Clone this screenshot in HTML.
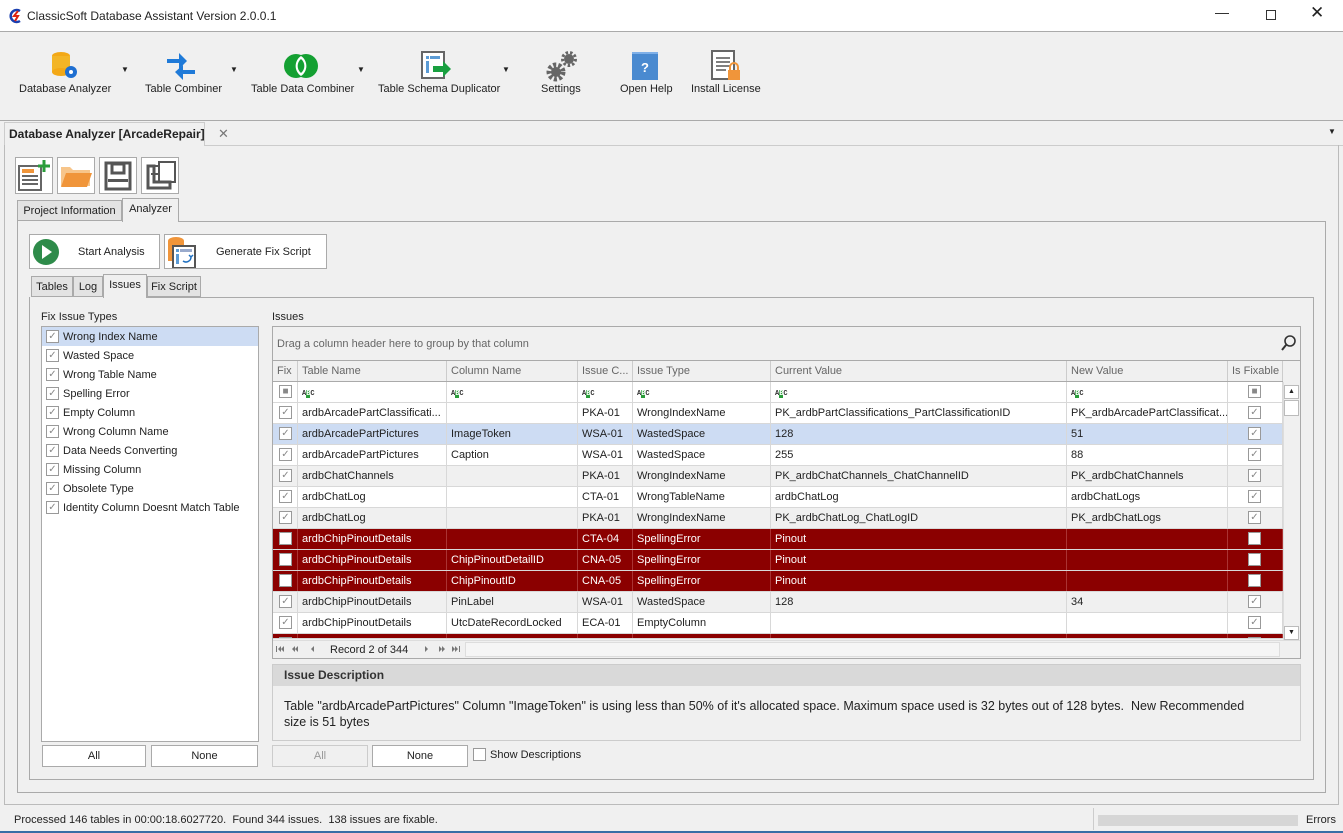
<!DOCTYPE html><html><head><style>
*{box-sizing:border-box;margin:0;padding:0}
body{width:1343px;height:833px;background:#f0f0f0;font-family:"Liberation Sans",sans-serif;font-size:11px;color:#222;position:relative;overflow:hidden}
.a{position:absolute}
.b{position:absolute;border:1px solid #aaa}
.t{position:absolute;white-space:nowrap}
.row{position:absolute;left:273px;width:1010px;height:21px;border-bottom:1px solid #d8d8d8}
.row div{position:absolute;top:0;height:20px;line-height:20px;padding-left:4px;border-right:1px solid #d8d8d8;white-space:nowrap;overflow:hidden}
.cb{position:absolute;width:13px;height:13px;border:1px solid #999;background:#fff;color:#888;font-size:10px;line-height:11px;text-align:center}
.red{background:#8b0000;color:#fff}
.red div{border-right-color:#a33}
.btn{position:absolute;background:#fff;border:1px solid #aaa;text-align:center}
.tab{position:absolute;border:1px solid #aaa;background:#e3e3e3;text-align:center;line-height:20px}
</style></head><body>
<div class="a" style="left:0;top:0;width:1343px;height:32px;background:#fff;border-bottom:1px solid #aaa"></div>
<svg class="a" style="left:8px;top:8px" width="16" height="16"><path d="M12 3A6 6 0 1 0 12 13" fill="none" stroke="#1a3fb0" stroke-width="2.5"/><path d="M10 3L6 8h4l-3 5" fill="none" stroke="#d21" stroke-width="2"/></svg>
<div class="t" style="left:27px;top:9px;font-size:12px">ClassicSoft Database Assistant Version 2.0.0.1</div>
<div class="t" style="left:1215px;top:4px;font-size:14px">&#8212;</div>
<div class="a" style="left:1266px;top:10px;width:10px;height:10px;border:1px solid #333"></div>
<div class="t" style="left:1310px;top:3px;font-size:17px">&#10005;</div>
<svg class="a" style="left:50px;top:50px" width="32" height="32"><ellipse cx="11" cy="6" rx="9" ry="4" fill="#f3a816"/><rect x="2" y="6" width="18" height="16" fill="#f3b526"/><ellipse cx="11" cy="22" rx="9" ry="4" fill="#f3a816"/><circle cx="21" cy="22" r="6" fill="#1f6fd1"/><circle cx="21" cy="22" r="2" fill="#fff"/></svg>
<div class="t" style="left:19px;top:83px">Database Analyzer</div><div class="t" style="left:121px;top:65px;font-size:8px">&#9660;</div>
<svg class="a" style="left:165px;top:50px" width="32" height="32"><path d="M2 9h12V3l8 8-8 8v-6H2z" fill="#1f7ad8"/><path d="M30 20H18v-5l-8 7 8 8v-6h12z" fill="#1f7ad8"/></svg>
<div class="t" style="left:145px;top:83px">Table Combiner</div><div class="t" style="left:230px;top:65px;font-size:8px">&#9660;</div>
<svg class="a" style="left:284px;top:53px" width="34" height="26"><circle cx="12" cy="13" r="12" fill="#14a032"/><circle cx="22" cy="13" r="12" fill="#14a032"/><path d="M17 3a12 12 0 0 1 0 20a12 12 0 0 1 0-20z" fill="#fff"/><path d="M17 6a9 9 0 0 1 0 14a9 9 0 0 1 0-14z" fill="#14a032"/></svg>
<div class="t" style="left:251px;top:83px">Table Data Combiner</div><div class="t" style="left:357px;top:65px;font-size:8px">&#9660;</div>
<svg class="a" style="left:421px;top:51px" width="32" height="30"><rect x="1" y="1" width="22" height="26" fill="#fff" stroke="#666" stroke-width="2"/><rect x="5" y="5" width="3" height="3" fill="#5b9bd5"/><rect x="9" y="5" width="10" height="3" fill="#5b9bd5"/><rect x="5" y="10" width="3" height="12" fill="#5b9bd5"/><path d="M12 15h10v-5l8 8-8 8v-5H12z" fill="#19a040"/></svg>
<div class="t" style="left:378px;top:83px">Table Schema Duplicator</div><div class="t" style="left:502px;top:65px;font-size:8px">&#9660;</div>
<svg class="a" style="left:545px;top:50px" width="34" height="32"><circle cx="11" cy="22" r="7" fill="none" stroke="#666" stroke-width="5" stroke-dasharray="3 2"/><circle cx="11" cy="22" r="5" fill="#666"/><circle cx="24" cy="9" r="5" fill="#666"/><circle cx="24" cy="9" r="6.5" fill="none" stroke="#666" stroke-width="3" stroke-dasharray="2.5 2"/></svg>
<div class="t" style="left:541px;top:83px">Settings</div>
<svg class="a" style="left:632px;top:52px" width="26" height="28"><rect x="0" y="0" width="26" height="28" fill="#4a8ad0"/><rect x="0" y="0" width="26" height="2" fill="#7fb0e8"/><text x="9" y="20" fill="#fff" font-size="13" font-weight="bold" font-family="Liberation Sans">?</text></svg>
<div class="t" style="left:620px;top:83px">Open Help</div>
<svg class="a" style="left:711px;top:50px" width="32" height="32"><rect x="1" y="1" width="22" height="28" fill="#fff" stroke="#666" stroke-width="2"/><path d="M5 8h14M5 12h14M5 16h14M5 20h10" stroke="#555" stroke-width="1.5"/><rect x="17" y="20" width="12" height="10" fill="#f0953a"/><path d="M19 20v-3a4 4 0 0 1 8 0v3" fill="none" stroke="#f0953a" stroke-width="2"/></svg>
<div class="t" style="left:691px;top:83px">Install License</div>
<div class="a" style="left:0;top:120px;width:1343px;height:1px;background:#aaa"></div>
<div class="a" style="left:4px;top:122px;width:201px;height:24px;border:1px solid #ccc;border-bottom:none;background:#f0f0f0"></div>
<div class="t" style="left:9px;top:127px;font-weight:bold;font-size:12px">Database Analyzer [ArcadeRepair]</div>
<div class="t" style="left:218px;top:126px;color:#777;font-size:13px">&#10005;</div>
<div class="t" style="left:1328px;top:127px;font-size:8px">&#9660;</div>
<div class="a" style="left:205px;top:145px;width:1138px;height:1px;background:#ccc"></div>
<div class="a" style="left:4px;top:145px;width:1335px;height:660px;border:1px solid #bbb;border-top:none"></div>
<div class="b" style="left:15px;top:157px;width:38px;height:37px;background:#fff"></div>
<svg class="a" style="left:17px;top:160px" width="34" height="32"><rect x="2" y="6" width="22" height="24" fill="#fff" stroke="#666" stroke-width="2"/><rect x="5" y="9" width="12" height="4" fill="#f0953a"/><path d="M5 16h16M5 20h16M5 24h16" stroke="#666" stroke-width="2"/><path d="M27 0v12M21 6h12" stroke="#2a9d3a" stroke-width="3"/></svg>
<div class="b" style="left:57px;top:157px;width:38px;height:37px;background:#fff"></div>
<svg class="a" style="left:60px;top:163px" width="32" height="26"><path d="M1 4h9l3 3h17v16H1z" fill="#f7c58a"/><path d="M6 10h26l-5 14H1z" fill="#f0953a"/></svg>
<div class="b" style="left:99px;top:157px;width:38px;height:37px;background:#fff"></div>
<svg class="a" style="left:104px;top:161px" width="28" height="30"><rect x="2" y="2" width="24" height="26" fill="none" stroke="#555" stroke-width="3"/><rect x="8" y="3" width="12" height="9" fill="none" stroke="#555" stroke-width="3"/><rect x="4" y="18" width="20" height="3" fill="#555"/></svg>
<div class="b" style="left:141px;top:157px;width:38px;height:37px;background:#fff"></div>
<svg class="a" style="left:145px;top:160px" width="32" height="30"><path d="M3 6v22h22v-6H9V6z" fill="none" stroke="#555" stroke-width="3"/><path d="M6 6h8v8H6" fill="none" stroke="#555" stroke-width="2"/><rect x="14" y="2" width="16" height="20" fill="none" stroke="#555" stroke-width="2"/></svg>
<div class="tab" style="left:17px;top:200px;width:105px;height:21px">Project Information</div>
<div class="tab" style="left:122px;top:198px;width:57px;height:24px;background:#f0f0f0;border-bottom:none">Analyzer</div>
<div class="a" style="left:17px;top:221px;width:1309px;height:572px;border:1px solid #aaa;border-top:none"></div>
<div class="a" style="left:179px;top:221px;width:1147px;height:1px;background:#aaa"></div>
<div class="btn" style="left:29px;top:234px;width:131px;height:35px"></div>
<svg class="a" style="left:32px;top:238px" width="28" height="28"><circle cx="14" cy="14" r="13" fill="#2e8b4a"/><path d="M10 7l10 7-10 7z" fill="#fff"/></svg>
<div class="t" style="left:78px;top:246px">Start Analysis</div>
<div class="btn" style="left:164px;top:234px;width:163px;height:35px"></div>
<svg class="a" style="left:167px;top:236px" width="32" height="32"><ellipse cx="9" cy="5" rx="8" ry="4" fill="#f0953a"/><rect x="1" y="5" width="16" height="20" fill="#f0953a"/><rect x="6" y="10" width="22" height="22" fill="#fff" stroke="#555" stroke-width="2"/><rect x="9" y="13" width="3" height="3" fill="#5b9bd5"/><rect x="13" y="13" width="12" height="3" fill="#9ac"/><rect x="9" y="18" width="3" height="10" fill="#5b9bd5"/><path d="M16 25a5 5 0 0 0 8-4M22 19l2 2 2-2" fill="none" stroke="#2070c0" stroke-width="1.5"/></svg>
<div class="t" style="left:216px;top:246px">Generate Fix Script</div>
<div class="tab" style="left:31px;top:276px;width:42px;height:21px">Tables</div>
<div class="tab" style="left:73px;top:276px;width:30px;height:21px">Log</div>
<div class="tab" style="left:103px;top:274px;width:44px;height:24px;background:#f0f0f0;border-bottom:none">Issues</div>
<div class="tab" style="left:147px;top:276px;width:54px;height:21px">Fix Script</div>
<div class="a" style="left:29px;top:297px;width:1285px;height:483px;border:1px solid #aaa;border-top:none"></div>
<div class="a" style="left:147px;top:297px;width:1167px;height:1px;background:#aaa"></div>
<div class="t" style="left:41px;top:311px">Fix Issue Types</div>
<div class="a" style="left:41px;top:326px;width:218px;height:416px;background:#fff;border:1px solid #aaa"></div>
<div class="a" style="left:42px;top:327px;width:216px;height:19px;background:#cddcf3"></div>
<div id="L"></div>
<div class="btn" style="left:42px;top:745px;width:104px;height:22px;line-height:20px">All</div>
<div class="btn" style="left:151px;top:745px;width:107px;height:22px;line-height:20px">None</div>
<div class="t" style="left:272px;top:311px">Issues</div>
<div class="a" style="left:272px;top:326px;width:1029px;height:333px;border:1px solid #aaa;background:#f0f0f0"></div>
<div class="t" style="left:277px;top:338px;color:#666">Drag a column header here to group by that column</div>
<svg class="a" style="left:1281px;top:335px" width="16" height="16"><circle cx="9" cy="6" r="5" fill="none" stroke="#333" stroke-width="1.6"/><path d="M5 10l-4 5" stroke="#333" stroke-width="2"/></svg>
<div class="a" style="left:273px;top:360px;width:1027px;height:1px;background:#aaa"></div>
<div class="row" style="top:361px;height:21px;border-bottom-color:#aaa;color:#666" id="H"></div>
<div class="row" style="top:382px;background:#fff" id="F"></div>
<div id="R"></div>
<div class="a" style="left:1283px;top:382px;width:17px;height:258px;background:#f0f0f0;border-left:1px solid #ddd"></div>
<div class="a" style="left:1284px;top:385px;width:15px;height:14px;border:1px solid #bbb;background:#fff;font-size:7px;text-align:center;line-height:12px">&#9650;</div>
<div class="a" style="left:1284px;top:400px;width:15px;height:16px;border:1px solid #bbb;background:#fff"></div>
<div class="a" style="left:1284px;top:626px;width:15px;height:14px;border:1px solid #bbb;background:#fff;font-size:7px;text-align:center;line-height:12px">&#9660;</div>
<div class="a" style="left:273px;top:640px;width:1027px;height:18px;background:#f0f0f0;border-top:1px solid #ddd"></div>
<svg class="a" style="left:276px;top:645px" width="50" height="8"><g fill="#777"><rect x="0" y="1" width="1" height="6"/><path d="M5 1v6L2 4zM8 1v6L5 4z"/><path d="M19 1v6l-3-3zM22 1v6l-3-3z"/><path d="M38 1v6l-3-3z"/></g></svg>
<div class="t" style="left:330px;top:644px">Record 2 of 344</div>
<svg class="a" style="left:424px;top:645px" width="40" height="8"><g fill="#777"><path d="M1 1v6l3-3z"/><path d="M15 1v6l3-3zM18 1v6l3-3z"/><path d="M28 1v6l3-3zM31 1v6l3-3z"/><rect x="35" y="1" width="1" height="6"/></g></svg>
<div class="a" style="left:465px;top:642px;width:815px;height:15px;border:1px solid #ddd;background:#f5f5f5"></div>
<div class="a" style="left:272px;top:664px;width:1029px;height:77px;border:1px solid #ccc;background:#f0f0f0"></div>
<div class="a" style="left:273px;top:665px;width:1027px;height:21px;background:#d9d9d9"></div>
<div class="t" style="left:284px;top:668px;font-weight:bold;font-size:12px;color:#333">Issue Description</div>
<div class="t" style="left:284px;top:698px;font-size:12.5px;line-height:16px">Table "ardbArcadePartPictures" Column "ImageToken" is using less than 50% of it's allocated space. Maximum space used is 32 bytes out of 128 bytes.&nbsp; New Recommended<br>size is 51 bytes</div>
<div class="a" style="left:272px;top:745px;width:96px;height:22px;border:1px solid #ccc;text-align:center;line-height:20px;color:#999">All</div>
<div class="btn" style="left:372px;top:745px;width:96px;height:22px;line-height:20px">None</div>
<div class="cb" style="left:473px;top:748px"></div>
<div class="t" style="left:490px;top:749px">Show Descriptions</div>
<div class="t" style="left:14px;top:814px">Processed 146 tables in 00:00:18.6027720.&nbsp; Found 344 issues.&nbsp; 138 issues are fixable.</div>
<div class="a" style="left:1093px;top:808px;width:1px;height:22px;background:#ccc"></div>
<div class="a" style="left:1098px;top:815px;width:200px;height:11px;background:#d6d6d6"></div>
<div class="t" style="left:1306px;top:814px">Errors</div>
<div class="a" style="left:0;top:831px;width:1343px;height:2px;background:#3a6ea5"></div>
<script>
var L=["Wrong Index Name","Wasted Space","Wrong Table Name","Spelling Error","Empty Column","Wrong Column Name","Data Needs Converting","Missing Column","Obsolete Type","Identity Column Doesnt Match Table"],h="";
L.forEach(function(s,i){var y=330+i*19;h+='<div class="cb" style="left:46px;top:'+y+'px">&#10003;</div><div class="t" style="left:63px;top:'+(y+1)+'px">'+s+'</div>';});
document.getElementById("L").outerHTML=h;
var C=[[0,25],[25,149],[174,131],[305,55],[360,138],[498,296],[794,161],[955,55]];
function cells(v,fx){var s="";C.forEach(function(c,i){var t=v[i];if(i==0||i==7)t='<span class="cb" style="left:'+(i==0?6:20)+'px;top:3px">'+fx+'</span>';s+='<div style="left:'+c[0]+'px;width:'+c[1]+'px">'+t+'</div>';});return s;}
var H=["Fix","Table Name","Column Name","Issue C...","Issue Type","Current Value","New Value","Is Fixable"],hs="";
C.forEach(function(c,i){hs+='<div style="left:'+c[0]+'px;width:'+c[1]+'px;border-right-color:#ccc">'+H[i]+'</div>';});
document.getElementById("H").innerHTML=hs;
var ab='<span style="font-size:7px;font-family:Liberation Mono;font-weight:bold;color:#333">A<span style="background:#2a9d3a;color:#fff">B</span>C</span>';
document.getElementById("F").innerHTML=cells(["",ab,ab,ab,ab,ab,ab,""],"&#9632;");
var D=[["ardbArcadePartClassificati...","","PKA-01","WrongIndexName","PK_ardbPartClassifications_PartClassificationID","PK_ardbArcadePartClassificat..."],
["ardbArcadePartPictures","ImageToken","WSA-01","WastedSpace","128","51"],
["ardbArcadePartPictures","Caption","WSA-01","WastedSpace","255","88"],
["ardbChatChannels","","PKA-01","WrongIndexName","PK_ardbChatChannels_ChatChannelID","PK_ardbChatChannels"],
["ardbChatLog","","CTA-01","WrongTableName","ardbChatLog","ardbChatLogs"],
["ardbChatLog","","PKA-01","WrongIndexName","PK_ardbChatLog_ChatLogID","PK_ardbChatLogs"],
["ardbChipPinoutDetails","","CTA-04","SpellingError","Pinout",""],
["ardbChipPinoutDetails","ChipPinoutDetailID","CNA-05","SpellingError","Pinout",""],
["ardbChipPinoutDetails","ChipPinoutID","CNA-05","SpellingError","Pinout",""],
["ardbChipPinoutDetails","PinLabel","WSA-01","WastedSpace","128","34"],
["ardbChipPinoutDetails","UtcDateRecordLocked","ECA-01","EmptyColumn","",""],
["ardbChipPinoutDetails","","CTA-04","SpellingError","Pinout",""]];
var r="";D.forEach(function(d,i){var red=i>=6&&i<=8||i==11;var bg=i==1?"#cddcf3":(i%2?"#f0f0f0":"#fff");var y=403+i*21;var hh=i==11?5:21;
r+='<div class="row'+(red?' red':'')+'" style="top:'+y+'px;height:'+hh+'px;overflow:hidden;'+(red?'':'background:'+bg)+'">'+cells([""].concat(d).concat([""]),red?"":"&#10003;")+'</div>';});
document.getElementById("R").outerHTML=r;
</script>
</body></html>
